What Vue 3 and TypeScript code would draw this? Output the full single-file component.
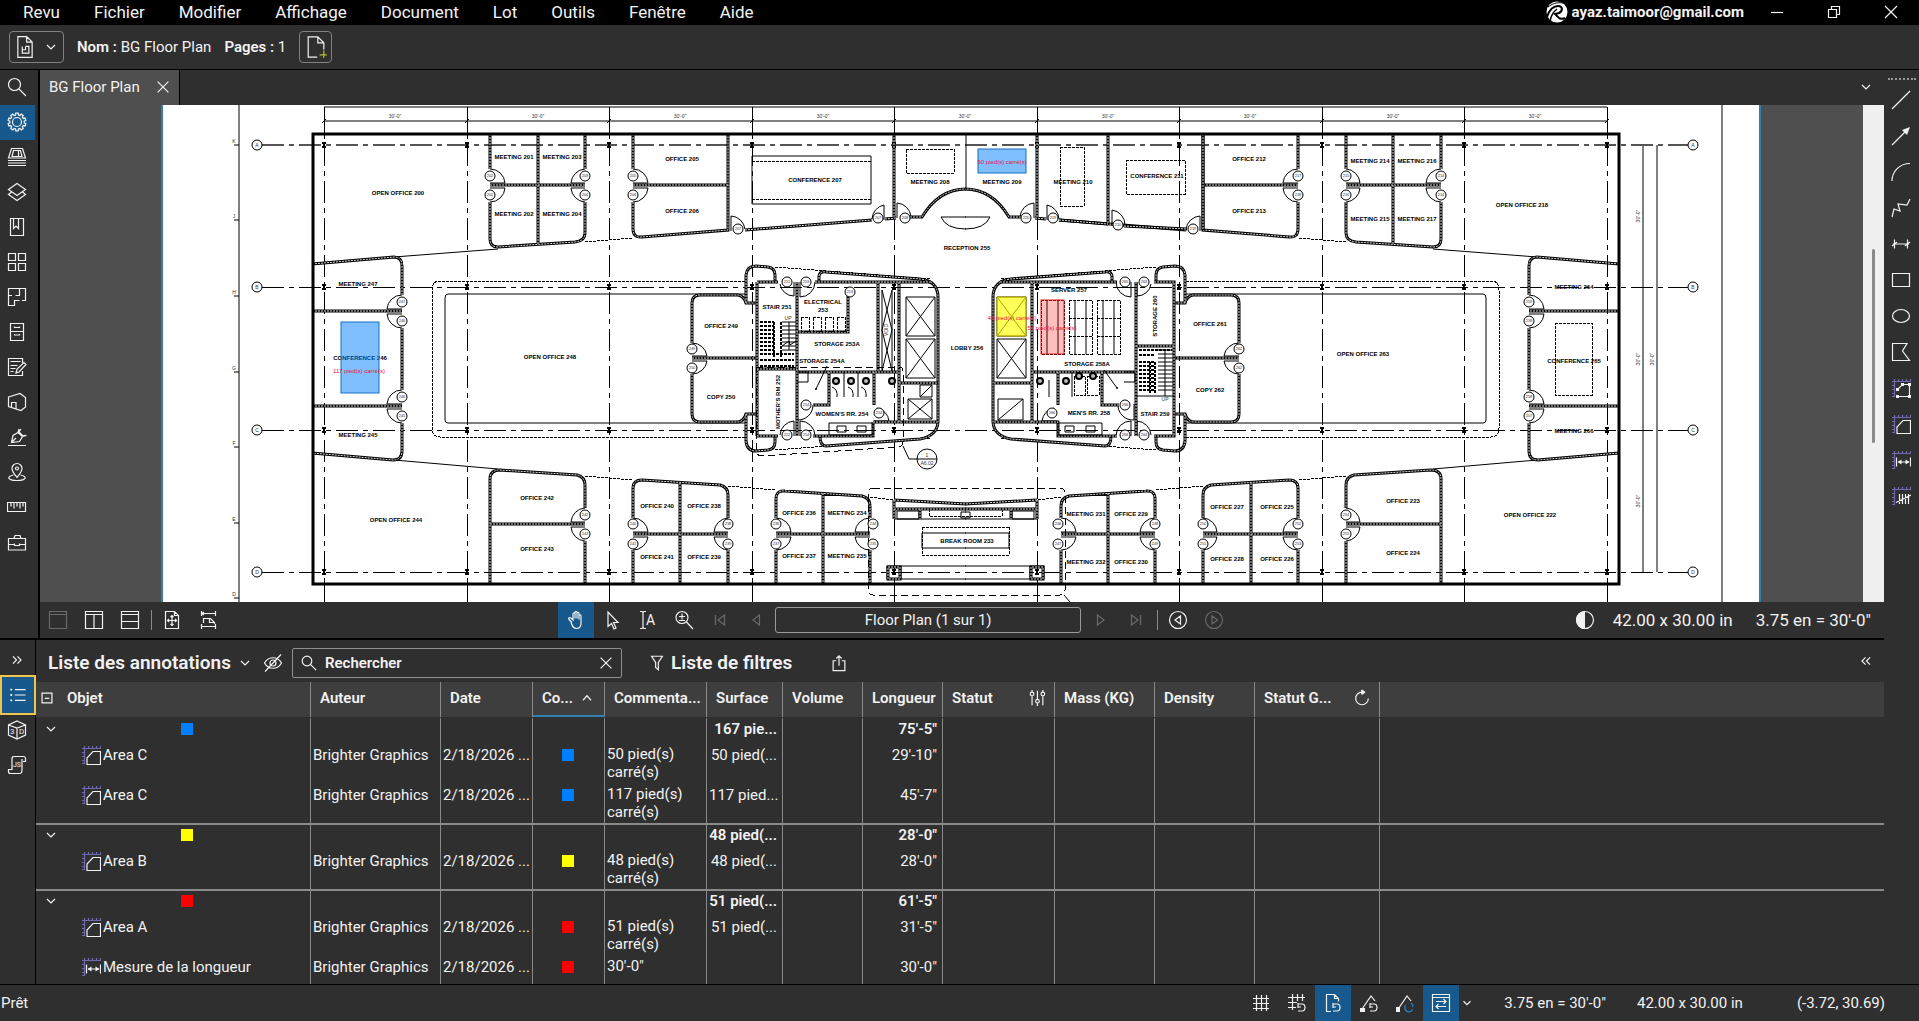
<script setup lang="ts">
import { h } from 'vue'

interface IconShape {
  stroke?: string
  fill?: string
  accent?: string
  accentColor?: string
  glyphs?: { x: number; y: number; size: number; text: string }[]
}

const ring = (x: number, y: number, r: number): string =>
  `M${x - r} ${y}a${r} ${r} 0 1 0 ${2 * r} 0a${r} ${r} 0 1 0 ${-2 * r} 0`

const gearOutline = (): string => {
  const teeth = 10
  const points: string[] = []
  for (let i = 0; i < teeth; i++) {
    const base = (i / teeth) * Math.PI * 2 - Math.PI / 2
    const corners: [number, number][] = [[-0.2, 7.2], [-0.14, 9], [0.14, 9], [0.2, 7.2]]
    for (const [turn, radius] of corners) {
      points.push(`${(10 + radius * Math.cos(base + turn)).toFixed(2)} ${(10 + radius * Math.sin(base + turn)).toFixed(2)}`)
    }
  }
  return `M${points.join('L')}z`
}

const scaleMarks = 'M3.5 1v18M1 3.5h19M1 7.500h2.500M1 11.5h2.500M1 15.5h2.500M1 18.5h2.500M7.500 1v2.500M11.5 1v2.500M15.5 1v2.500M19.5 1v2.500'

const shapes: Record<string, IconShape> = {
  search: { stroke: ring(7.5, 7.5, 6) + 'M12 12l7 7' },
  gear: { stroke: gearOutline() + ring(10, 10, 4.5) },
  thumbs: { stroke: 'M4.5 1.5h11l3 9.5h-17zM6.5 3.5h7l1.500 6h-10zM11.5 3.5v6M1 13.5h18M1 16h18M1 18.5h18' },
  layers: { stroke: 'M10 1.5l8.5 6L10 13.500 1.500 7.500zM4.500 10l-3 2.500L10 18.500l8.500-6-3-2.500' },
  bookmark: { stroke: 'M3.500 1.500h13v17h-13zM6.500 1.500v10l2.500-2.500 2.500 2.500v-10' },
  tiles: { stroke: 'M1.500 1.500h7v7h-7zM11.500 1.500h7v7h-7zM1.500 11.500h7v7h-7zM11.500 11.500h7v7h-7z' },
  spaces: { stroke: 'M5 8.500H1.500v-7h17v12H15M12.500 1.500v7h-4M1.500 8.500v10h6v-5h5' },
  cabinet: { stroke: 'M3.500 1.500h13v17h-13zM3.500 9.500h13M7.500 4.500v1h5v-1M7.500 12v1h5v-1' },
  form: { stroke: 'M15.500 6V1.500h-14v17h14V14M3.500 4.500h10M3.500 8.500h7M3.500 11.500h5M3.500 14.500h3M9 16l1-4 7-6.500 2 2L12 15z' },
  model: { stroke: 'M1.500 5L13 1.500l5.500 4v9.500L14 18.500l-12.500-4zM4.500 15v-4.500h4.500v6' },
  sign: { stroke: 'M1 18.500h18M4.500 15.500l1.500-7 5-3 4.500 4-3 5zM5 15l4-4M11 5.500L12 2M15.500 9.500l4-1M14 2l-2 3 4 4 2.500-1' },
  pin: { stroke: 'M10 15.500c-3-4-5-6-5-9a5 5 0 0 1 10 0c0 3-2 5-5 9zM6.500 13c-7 1.500-6.500 5.500 3.500 5.500s10.500-4 3.500-5.500' + ring(10, 6.500, 1.500) },
  ruler: { stroke: 'M.500 5.500h18v9H.500zM4 5.500v4M7 5.500v6M10 5.500v4M13 5.500v6M16 5.500v4' },
  toolbox: { stroke: 'M1.500 6.500h17v11.500h-17zM7 6.500l1-3h5l1 3M1.500 12.500h6m5 0h6M7.500 11.500v2h5v-2' },
  line: { stroke: 'M1 19L19 1' },
  arrow: { stroke: 'M1 19L15 5', fill: 'M19 1L11 4l5 5z' },
  arc: { stroke: 'M1 19C1 10 8 1.500 19 1.500' },
  polyline: { stroke: 'M1 19l2-8 6 2-2-7 9 1 3-6' },
  dimension: { stroke: 'M2 10h16M3.500 5.500v9M16.500 5.500v9M1 12l5-4M14 12l5-4' },
  rectangle: { stroke: 'M1.500 3.500h17v13h-17z' },
  ellipse: { stroke: 'M1.500 10a8.500 6.500 0 1 0 17 0a8.500 6.500 0 1 0-17 0' },
  polygon: { stroke: 'M1.500 1.500h14.500L11.500 9l7 9.500h-17z' },
  polyArea: { accent: scaleMarks, stroke: 'M6.500 11.500l5-5h7v12h-12', fill: 'M5 10h3v3H5zM10 5h3v3h-3zM17 5h3v3h-3zM17 17h3v3h-3zM5 17h3v3H5z' },
  area: { accent: scaleMarks, stroke: 'M6 19.500V13l6-6.500h7.500v13z' },
  length: { accent: scaleMarks, stroke: 'M5.500 7.500v9M19.500 7.500v9M7 12h11', fill: 'M6.500 12l4-2.500v5zM18.500 12l-4-2.500v5z' },
  count: { accent: scaleMarks, stroke: 'M8.500 8v10M11.500 8v10M14.500 8v10M17.500 8v10M5 16.500L20 9' },
  paneNone: { stroke: 'M1.500 1.500h17v17h-17zM1.500 4.500h17' },
  paneSplitV: { stroke: 'M1.500 1.500h17v17h-17zM1.500 4.500h17M10 4.500v14' },
  paneSplitH: { stroke: 'M1.500 1.500h17v17h-17zM1.500 4.500h17M1.500 11.500h17' },
  fitPage: { stroke: 'M3.500 1.500h9l4 4v13h-13zM12.500 1.500v4h4M10 5v11M5 10.500h10M8.500 7L10 5.500 11.500 7M8.500 14l1.500 1.500 1.500-1.500M7 9l-1.500 1.500L7 12M13 9l1.500 1.500L13 12' },
  fitWidth: { stroke: 'M3 3.500h15M3.500 1v5M17.500 1v5M5.500 13V8.500h7l4 4V14M11.500 8.500v4h5M3 16.500h15M3.500 14v5M17.500 14v5M4 3.500l2-1.500M4 3.500L6 5' },
  hand: { stroke: 'M6 12.500L3 9.500c-1-1.500.500-2.500 1.800-1.500L7 10V4c0-1.500 2-1.500 2 0v4.500V2.500c0-1.500 2-1.500 2 0v6-5c0-1.500 2-1.500 2 0v6V6c0-1.500 2-1.500 2 0v7c0 4-2 5.500-4.500 5.500-3 0-4-2-5.500-6' },
  cursor: { stroke: 'M6 2v14.500l3.500-3L12 19l2-1-2.500-5.500H16z' },
  textSelect: { stroke: 'M2 1.500h2l1 1 1-1h2M2 18.500h2l1-1 1 1h2M5 2.500v15', glyphs: [{ x: 8, y: 15, size: 14, text: 'A' }] },
  zoom: { stroke: ring(8, 7.500, 6) + 'M12.500 12l6.500 7M5 6.500h6M8 3.500v6M5 10.500h6' },
  first: { stroke: 'M5.500 5v10M14.500 5v10L8 10z' },
  previous: { stroke: 'M13.500 5v10L7 10z' },
  next: { stroke: 'M7.500 5v10l6.500-5z' },
  last: { stroke: 'M5.500 5v10l6.500-5zM14.500 5v10' },
  viewBack: { stroke: ring(10, 10, 8.500) + 'M12.500 6v8L7 10z' },
  viewForward: { stroke: ring(10, 10, 8.500) + 'M8 6v8l5.500-4z' },
  contrast: { stroke: ring(10, 10, 8.500), fill: 'M10 1a9 9 0 0 0 0 18z' },
  chevronDown: { stroke: 'M5 7.500l5 5 5-5' },
  chevronUp: { stroke: 'M5.500 12.500L10 7.500l4.500 5' },
  doubleRight: { stroke: 'M5.500 6l4 4-4 4M10.500 6l4 4-4 4' },
  doubleLeft: { stroke: 'M9.500 6l-4 4 4 4M14.500 6l-4 4 4 4' },
  close: { stroke: 'M4 4l12 12M16 4L4 16' },
  minimise: { stroke: 'M4 10.500h12' },
  restore: { stroke: 'M4.500 7.500h8v8h-8zM7.500 7.500v-3h8v8h-3' },
  eyeOff: { stroke: 'M1.500 10c4-7 13-7 17 0-4 7-13 7-17 0zM18 1.500L2 18.500' + ring(10, 10, 3) },
  filter: { stroke: 'M4 2.500h12l-4.500 7v8l-3-2.500V9.500z' },
  share: { stroke: 'M7 7.500H3.500v11h13v-11H13M10 13V2M7 5l3-3 3 3' },
  list: { stroke: 'M6.500 4h12M6.500 10h12M6.500 16h12', fill: 'M1.500 3h2v2h-2zM1.500 9h2v2h-2zM1.500 15h2v2h-2z' },
  cube: { stroke: 'M10 1l8.500 4v10L10 19l-8.500-4V5zM1.500 5l8.500 3 8.500-3M10 8v11', glyphs: [{ x: 3, y: 14, size: 8, text: '3' }, { x: 12, y: 14, size: 8, text: 'D' }] },
  script: { stroke: 'M16 6.500h2.500v-3c0-2-2-2-2-2H8c-2 0-3 0-3 2v11H1.500v2c0 1.500 1 2 2 2h9c2.500 0 2.500-2.500 2.500-4V4', glyphs: [{ x: 6, y: 12, size: 7, text: 'JS' }] },
  sliders: { stroke: 'M4.500 8v10M10.500 2v9M10.500 16v3M16.500 8v10M4.500 1v2M16.500 1v2' + ring(4.500, 5.500, 2) + ring(10.500, 13.500, 2) + ring(16.500, 5.500, 2) },
  reload: { stroke: 'M10 3.500a7 7 0 1 0 7 7M10 1l3 2.500L10 6', fill: 'M9 .500l4 3-4 3z' },
  hash: { stroke: 'M2 5.500h16M2 10.500h16M2 15.500h16M5.500 2v16M10.500 2v16M15.500 2v16' },
  hashSnap: { stroke: 'M1 4.500h17M1 9.500h9M1 14.500h8M5.500 1v16M10.500 1v7M15.500 1v7M11 11h4c4 0 4 7 0 7h-4M11 14h3M11 10v5' },
  pageSnap: { stroke: 'M8 18.500H3.500v-17h8l4 4v3M11.500 1.500v4h4M10 11h4c4 0 4 7 0 7h-4M10 14h3M10 10v5' },
  markSnap: { stroke: 'M2 17.500L12 3l4 5M11 11h4c4 0 4 7 0 7h-4M11 14h3M11 10v5', fill: 'M1 15h5v4H1z' },
  reuse: { stroke: 'M2.500 17L12 3l4 5', fill: 'M1 14h4v5H1z', accent: 'M10.500 12a5 5 0 0 0 1 6c2 1.500 5 1 6-1.500M18 14a5 5 0 0 0-2-4', accentColor: '#1c8ad6' },
  sync: { stroke: 'M1.500 1.500h17v17h-17zM1.500 4.500h17M5 8.500h10M12.500 6L15 8.500 12.500 11M15 13.500H5M7.500 11L5 13.500 7.500 16' },
  fileLock: { stroke: 'M3.500 .500h8l5 5v14h-13zM11.500 .500v5h5M7.500 9.500v6h6v-6h-3M10.500 9.500v3h-3' },
  filePlus: { stroke: 'M11 18.500H3.500v-17h8l5 5V12M11.500 1.500v5h5', accent: 'M13 16.500h6M16.500 13v6', accentColor: '#b5c431' },
  collapse: { stroke: 'M4.500 4.500h11v11h-11zM7.500 10.500h5' },
}

const Icon = (props: { name: string; size?: number }) => {
  const shape = shapes[props.name]
  const size = props.size ?? 20
  return h(
    'svg',
    { class: 'icon', viewBox: '0 0 20 20', width: size, height: size, 'aria-hidden': 'true', fill: 'none', stroke: 'currentColor', 'stroke-width': 24 / size },
    [
      shape.accent ? h('path', { d: shape.accent, style: { stroke: shape.accentColor ?? '#6f69ae' } }) : null,
      shape.stroke ? h('path', { d: shape.stroke }) : null,
      shape.fill ? h('path', { d: shape.fill, fill: 'currentColor', stroke: 'none' }) : null,
      ...(shape.glyphs ?? []).map((g) => h('text', { x: g.x, y: g.y, fill: 'currentColor', stroke: 'none', 'font-size': g.size }, g.text)),
    ],
  )
}
Icon.props = ['name', 'size']

const menus = ['Revu', 'Fichier', 'Modifier', 'Affichage', 'Document', 'Lot', 'Outils', 'Fenêtre', 'Aide']

const sideTools = [
  ['search', 'Recherche'], ['gear', 'Propriétés'], ['thumbs', 'Vignettes'], ['layers', 'Calques'], ['bookmark', 'Signets'],
  ['tiles', 'Jeux'], ['spaces', 'Espaces'], ['cabinet', 'Accès aux fichiers'], ['form', 'Formulaires'], ['model', 'Arborescence'],
  ['sign', 'Signatures'], ['pin', 'Lieux'], ['ruler', 'Mesures'], ['toolbox', 'Coffre à outils'],
]

const drawTools = [
  ['line', 'Ligne'], ['arrow', 'Flèche'], ['arc', 'Arc'], ['polyline', 'Polyligne'], ['dimension', 'Cote'], ['rectangle', 'Rectangle'],
  ['ellipse', 'Ellipse'], ['polygon', 'Polygone'], ['polyArea', 'Surface polygonale'], ['area', 'Surface'], ['length', 'Longueur'], ['count', 'Comptage'],
]

interface Row { kind: string; name: string; note: string[]; surface: string; length: string }
interface Group { color: string; surface: string; length: string; rows: Row[] }

const groups: Group[] = [
  {
    color: '#0080ff', surface: '167 pie...', length: '75\'-5"',
    rows: [
      { kind: 'area', name: 'Area C', note: ['50 pied(s)', 'carré(s)'], surface: '50 pied(...', length: '29\'-10"' },
      { kind: 'area', name: 'Area C', note: ['117 pied(s)', 'carré(s)'], surface: '117 pied...', length: '45\'-7"' },
    ],
  },
  {
    color: '#ffff00', surface: '48 pied(...', length: '28\'-0"',
    rows: [{ kind: 'area', name: 'Area B', note: ['48 pied(s)', 'carré(s)'], surface: '48 pied(...', length: '28\'-0"' }],
  },
  {
    color: '#ff0000', surface: '51 pied(...', length: '61\'-5"',
    rows: [
      { kind: 'area', name: 'Area A', note: ['51 pied(s)', 'carré(s)'], surface: '51 pied(...', length: '31\'-5"' },
      { kind: 'length', name: 'Mesure de la longueur', note: ['30\'-0"'], surface: '', length: '30\'-0"' },
    ],
  },
]

/* Floor plan: structural grid, walls of one half, and what differs between the halves */
const gridX = [324, 467, 609, 752, 894, 1037, 1179, 1322, 1464, 1607]
const gridY = [145, 287, 430, 572]
const rowNames = ['A', 'B', 'C', 'D']
const sheetMarks = [['K', 145], ['J', 220], ['H', 296], ['G', 372], ['F', 447], ['E', 523], ['D', 598]]

const halfWalls = [
  'M490 134V169M490 202V239Q490 247 498 247L575 242Q585 241 585 233V202M585 134V169M538 134V245M490 185H585',
  'M633 134V169M633 202V229Q633 238 642 237L728 230V134M633 185H728',
  'M312 264L394 257Q402 257 402 266V295M312 311H402M402 328V390M312 406H402M402 423V451Q402 460 393 460L312 453',
  'M490 584V479Q490 470 500 470L577 475Q585 477 585 485V508M585 541V584M490 524H585',
  'M633 518V488Q633 480 642 480L720 485Q728 487 728 495V518M633 550V584M728 550V584M680 483V584M633 534H728',
  'M776 518V499Q776 490 785 491L862 496Q870 498 870 506V518M776 550V584M870 550V584M823 493V584M776 534H870',
  'M745 230L872 220M885 219L896 218M894 134V218',
  'M910 217H922Q939 189 966 189',
  'M692 343V303Q692 295 700 295H738Q744 296 746 303H757M692 374V414Q692 422 700 422H738Q744 421 746 414H757M692 358H757',
  'M746 303V275Q747 266 756 266L768 267Q775 268 775 275V282M746 414V441Q747 451 756 451L768 450Q775 449 775 442V436',
  'M819 282V276Q820 271 826 272L920 279Q938 281 938 297V422Q937 436 920 439L826 446Q820 446 820 436',
  'M894 500L966 504M894 509H966M894 500V519M920 509V519',
]
const leftWalls = [
  'M757 282H778M815 282H931M757 282V436M797 282V436M757 369H797M848 292V332H797M878 282V372M899 282V422M797 372H899M899 383H938M873 422H938M873 422V436H813M757 436H778M829 372V405H813M874 372V405',
]
const rightWalls = [
  'M1000 282H1117M1154 282H1174V436H1154M1117 436H1058V422H994M1136 282V436M1032 282V422M1032 372H1136M994 383H1032M1136 346H1174M1102 372V405H1119M1058 372V405M1203 134V230M1108 134V224M1059 220L1108 224M1124 226L1187 229',
]

const halfThin = [
  'M394 257L498 249M394 460L498 469',
  'M490 183H505M490 188H505M571 183H585M571 188H585M633 183H648M633 188H648M387 309H402M387 314H402M387 404H402M387 409H402M571 522H585M571 527H585M633 532H648M633 537H648M714 532H728M714 537H728M776 532H791M776 537H791M855 532H870M855 537H870M692 356H707M692 361H707',
  'M490 169A15 15 0 0 1 505 183M490 202A15 15 0 0 0 505 188M585 169A15 15 0 0 0 571 183M585 202A15 15 0 0 1 571 188M633 169A15 15 0 0 1 648 183M633 202A15 15 0 0 0 648 188',
  'M402 295A15 15 0 0 0 387 309M402 328A15 15 0 0 1 387 314M402 390A15 15 0 0 0 387 404M402 423A15 15 0 0 1 387 409M692 343A15 15 0 0 1 707 356M692 374A15 15 0 0 0 707 361',
  'M585 508A15 15 0 0 0 571 522M585 541A15 15 0 0 1 571 527M633 518A15 15 0 0 1 648 532M633 550A15 15 0 0 0 648 537M728 518A15 15 0 0 0 714 532M728 550A15 15 0 0 1 714 537',
  'M776 518A15 15 0 0 1 791 532M776 550A15 15 0 0 0 791 537M870 518A15 15 0 0 0 855 532M870 550A15 15 0 0 1 855 537',
  'M731 231V216A15 15 0 0 1 745 229M884 220V205A15 15 0 0 0 872 219M897 218V203A15 15 0 0 1 911 217',
  'M794 282V296A14 14 0 0 1 780 284M800 282V297A15 15 0 0 0 815 282M794 436V421A15 15 0 0 0 780 435M800 436V421A15 15 0 0 1 815 436M797 404V420A15 15 0 0 0 813 405M874 421H889A15 15 0 0 0 877 408',
  'M746 294H448Q445 294 445 298V420Q445 423 448 423H746',
  'M887 566H966M887 579H966M887 566V579M901 566V579M894 519H966',
  'M897 511h22v8h-22zM922 533H966M922 533V548H966M941 217H966M941 217Q946 229 966 229M961 512H966M961 512V518H966',
]
const halfDotted = [
  'M585 242L633 238M745 281H440Q432 281 432 290V428Q432 437 440 437H745',
  'M585 476L633 480M728 486L776 490M870 497L894 500M775 267L930 279M775 450L930 438',
  'M922 527H966M922 527V555H966M929 509V516H966',
]
const halfTags = [
  [490, 176, 202], [490, 195, 202], [585, 176, 203], [585, 195, 204], [633, 176, 205], [633, 195, 206],
  [402, 302, 247], [402, 321, 246], [402, 397, 246], [402, 416, 245], [692, 349, 249], [692, 368, 250],
  [585, 515, 242], [585, 534, 243], [633, 524, 240], [633, 544, 241], [728, 524, 238], [728, 544, 239],
  [776, 524, 236], [776, 544, 237], [873, 524, 234], [873, 544, 235], [738, 229, 207], [878, 218, 207], [905, 218, 208],
  [787, 282, 251], [806, 282, 253], [787, 435, 252], [806, 435, 254], [806, 405, 254], [879, 413, 254],
]
const axis = 1931
const tags = [...halfTags, ...halfTags.map(([x, y, n]) => [axis - x, y, n + 12]), [850, 292, 253], [1118, 225, 210]]

const fixtures = [
  'M752 156h119v48h-119zM966 134V189',
  'M882 290V371M892 290V371M882 290L892 330M892 290L882 330M882 371L892 330M892 371L882 330',
  'M906 297h29v39h-29zM906 297l29 39M935 297l-29 39M906 339h29v39h-29zM906 339l29 39M935 339l-29 39',
  'M997 297h29v39h-29zM997 297l29 39M1026 297l-29 39M997 339h29v39h-29zM997 339l29 39M1026 339l-29 39',
  'M920 385h12v12h-12zM920 397l12-12M908 399h24v20h-24zM908 399l24 20M932 399l-24 20M998 399h25v21h-25zM998 420l25-21',
  'M782 322h14M782 326h14M782 330h14M782 334h14M782 338h14M782 342h14M782 346h14M782 350h14M789 322V350M782 346l7-5 1 4 6-4',
  'M1158 350h15M1158 354h15M1158 358h15M1158 362h15M1158 366h15M1158 370h15M1158 374h15M1158 378h15M1158 382h15M1158 386h15M1158 390h15M1136 396h38M1165 350V396',
  'M829 423h44v12h-44zM837 426h9v6h-9zM857 426h9v6h-9zM1058 423h44v12h-44zM1065 426h9v6h-9zM1086 426h9v6h-9z',
  'M844 372V397M858 372V397M1049 380V397M1072 372V397M832 387q6 2 5 10M848 387q6 2 5 10M861 387q6 2 5 10M797 372h11v10h-11M1124 372h11v10h-11',
  'M827 366L816 389M1104 370L1117 388M903 446L909 459H917M917 459H937M1064 595L1070 602M1112 224V210A15 15 0 0 1 1125 225',
]
const dashedFixtures = [
  'M752 161H871M752 199H871M906 149h48v24h-48zM1060 147h24v59h-24zM1126 160h59v34h-59zM1555 323h37v72h-37z',
  'M801 317h8v14h-8zM813 317h8v14h-8zM825 317h8v14h-8zM837 317h8v14h-8z',
  'M1069 300h23v54h-23zM1069 318h23M1069 336h23M1097 300h23v54h-23zM1097 318h23M1097 336h23M1041 300h23v54h-23z',
  'M1074 376h11v19h-11zM1087 376h12v19h-12z',
]
const stairs = [
  'M760 322h14M760 326h14M760 330h14M760 334h14M760 338h14M760 342h14M760 346h14M760 350h14M760 354h34M774 322V357M781 322V357M760 360h34M760 366h34',
  'M1139 362h16M1139 366h16M1139 370h16M1139 374h16M1139 378h16M1139 382h16M1139 386h16M1139 390h16M1150 362V394M1155 362V394M1139 350h33M1139 355h16',
]
const toilets = [[836, 381], [851, 381], [866, 381], [892, 381], [1040, 381], [1066, 381], [1079, 376], [1093, 376]]

const labels: [string, number, number][] = [
  ['OPEN OFFICE 200', 398, 193], ['MEETING 201', 514, 157], ['MEETING 203', 562, 157], ['MEETING 202', 514, 214], ['MEETING 204', 562, 214],
  ['OFFICE 205', 682, 159], ['OFFICE 206', 682, 211], ['CONFERENCE 207', 815, 180], ['MEETING 208', 930, 182], ['MEETING 209', 1002, 182],
  ['MEETING 210', 1073, 182], ['CONFERENCE 211', 1157, 176], ['OFFICE 212', 1249, 159], ['OFFICE 213', 1249, 211], ['MEETING 214', 1370, 161],
  ['MEETING 216', 1417, 161], ['MEETING 215', 1370, 219], ['MEETING 217', 1417, 219], ['OPEN OFFICE 218', 1522, 205], ['RECEPTION 255', 967, 248],
  ['MEETING 247', 358, 284], ['CONFERENCE 246', 360, 358], ['MEETING 245', 358, 435], ['OPEN OFFICE 248', 550, 357], ['OFFICE 249', 721, 326],
  ['COPY 250', 721, 397], ['STAIR 251', 777, 307], ['ELECTRICAL', 823, 302], ['253', 823, 310], ['STORAGE 253A', 837, 344],
  ['STORAGE 254A', 822, 361], ['LOBBY 256', 967, 348], ['SERVER 257', 1069, 290], ['STORAGE 258A', 1087, 364], ['OFFICE 261', 1210, 324],
  ['COPY 262', 1210, 390], ['OPEN OFFICE 263', 1363, 354], ['MEETING 264', 1574, 287], ['CONFERENCE 265', 1574, 361], ['MEETING 266', 1574, 431],
  ['WOMEN\'S RR. 254', 842, 414], ['MEN\'S RR. 258', 1089, 413], ['STAIR 259', 1155, 414], ['OFFICE 242', 537, 498], ['OFFICE 243', 537, 549],
  ['OPEN OFFICE 244', 396, 520], ['OFFICE 240', 657, 506], ['OFFICE 238', 704, 506], ['OFFICE 241', 657, 557], ['OFFICE 239', 704, 557],
  ['OFFICE 236', 799, 513], ['MEETING 234', 847, 513], ['OFFICE 237', 799, 556], ['MEETING 235', 847, 556], ['BREAK ROOM 233', 967, 541],
  ['MEETING 231', 1086, 514], ['OFFICE 229', 1131, 514], ['MEETING 232', 1086, 562], ['OFFICE 230', 1131, 562], ['OFFICE 227', 1227, 507],
  ['OFFICE 225', 1277, 507], ['OFFICE 228', 1227, 559], ['OFFICE 226', 1277, 559], ['OFFICE 223', 1403, 501], ['OFFICE 224', 1403, 553],
  ['OPEN OFFICE 222', 1530, 515],
]
const uprightLabels: [string, number, number][] = [['MOTHER\'S RM 252', 778, 402], ['STORAGE 260', 1155, 316]]
const sideDims: [number, number][] = [[1640, 216], [1640, 359], [1654, 359], [1640, 501]]
</script>

<template>
  <div class="app">
    <header class="titlebar">
      <nav class="menus" aria-label="Menu principal">
        <button v-for="menu in menus" :key="menu" type="button">{{ menu }}</button>
      </nav>
      <div class="account">
        <svg class="logo" viewBox="0 0 22 22" width="22" height="22" aria-hidden="true">
          <circle cx="11" cy="11" r="10.500" fill="#fff" />
          <path d="M1 16C3 10 6 5 12 5c5 0 5 5 1 7l-4 1 4 4c2 1 4 1 6 0" fill="none" stroke="#000" stroke-width="2" />
          <path d="M4 20C5 15 7 11 11 8" fill="none" stroke="#000" stroke-width="1.500" />
          <path d="M2 6C6 3 10 1 17 2" fill="none" stroke="#000" stroke-width="1" />
        </svg>
        <span>ayaz.taimoor@gmail.com</span>
      </div>
      <div class="window-buttons">
        <button type="button" aria-label="Réduire"><Icon name="minimise" /></button>
        <button type="button" aria-label="Restaurer"><Icon name="restore" /></button>
        <button type="button" aria-label="Fermer"><Icon name="close" /></button>
      </div>
    </header>

    <section class="docbar">
      <button class="boxed split" type="button" aria-label="Type de document">
        <Icon name="fileLock" :size="22" /><Icon name="chevronDown" :size="16" />
      </button>
      <p><b>Nom :</b> BG Floor Plan</p>
      <p><b>Pages :</b> 1</p>
      <button class="boxed" type="button" aria-label="Ajouter une page"><Icon name="filePlus" :size="24" /></button>
    </section>

    <div class="workspace">
      <div class="main">
        <div class="upper">
          <nav class="rail" aria-label="Panneaux">
            <button v-for="[name, label] in sideTools" :key="name" type="button" :aria-label="label" :class="{ active: name === 'gear' }">
              <Icon :name="name" />
            </button>
          </nav>

          <section class="viewer">
            <div class="tabs">
              <div class="tab">
                <span>BG Floor Plan</span>
                <button type="button" aria-label="Fermer l'onglet"><Icon name="close" :size="18" /></button>
              </div>
              <button class="tab-menu" type="button" aria-label="Onglets"><Icon name="chevronDown" :size="16" /></button>
            </div>

            <div class="canvas">
              <svg class="plan" viewBox="40 105 1823 497" role="img" aria-label="Floor Plan">
                <rect x="162" y="105" width="1598" height="497" class="sheet" />
                <path class="sheet-edge" d="M162 105V602M1760 105V602" />
                <path class="thin" d="M239 105V602M1722 105V602" />
                <g v-for="[name, y] in sheetMarks" :key="name">
                  <path class="thin" :d="`M234 ${y}H239`" />
                  <text class="small" x="234" :y="Number(y) - 2">{{ name }}</text>
                </g>

                <path class="thin" d="M324 107H1607M324 121H1607M1643 145V572M1657 145V572" />
                <path v-for="x in gridX" :key="x" class="axis" :d="`M${x} 107V584`" />
                <path v-for="x in gridX" :key="`s${x}`" class="hair" :d="`M${x} 107V134M${x} 584V602`" />
                <template v-for="(x, i) in gridX" :key="`d${x}`">
                  <text v-if="i < 9" class="small" :x="x + 71" y="118">30'-0"</text>
                  <path class="thin" :d="`M${x - 2} 123l4-4`" />
                </template>
                <text v-for="[x, y] in sideDims" :key="`${x}-${y}`" class="small" :transform="`translate(${x} ${y}) rotate(-90)`">30'-0"</text>
                <template v-for="(y, i) in gridY" :key="y">
                  <path class="axis" :class="{ grey: i === 0 }" :d="`M262 ${y}H1688`" />
                  <circle class="bubble" cx="257" :cy="y" r="5" />
                  <circle class="bubble" cx="1693" :cy="y" r="5" />
                  <text class="small" x="257" :y="y + 2">{{ rowNames[i] }}</text>
                  <text class="small" x="1693" :y="y + 2">{{ rowNames[i] }}</text>
                  <path v-for="x in gridX" :key="x" class="column" :d="`M${x - 2} ${y - 2}h4M${x} ${y - 2}v4M${x - 2} ${y + 2}h4`" />
                </template>

                <g v-for="side in 2" :key="side" :transform="side === 2 ? `translate(${axis} 0) scale(-1 1)` : undefined">
                  <path v-for="d in halfDotted" :key="d" class="dotted" :d="d" />
                  <path v-for="d in halfThin" :key="d" class="thin" :d="d" />
                  <path v-for="d in halfWalls" :key="d" class="wall" :d="d" />
                  <path v-for="d in halfWalls" :key="`c${d}`" class="wall-core" :d="d" />
                  <path class="wall" d="M888 567h12v12h-12z" />
                  <path class="wall-core" d="M888 567h12v12h-12z" />
                </g>
                <path v-for="d in [...leftWalls, ...rightWalls]" :key="d" class="wall" :d="d" />
                <path v-for="d in [...leftWalls, ...rightWalls]" :key="`c${d}`" class="wall-core" :d="d" />
                <path v-for="d in fixtures" :key="d" class="thin" :d="d" />
                <path v-for="d in dashedFixtures" :key="d" class="dotted" :d="d" />
                <path v-for="d in stairs" :key="d" class="stair" :d="d" />
                <circle v-for="[x, y] in toilets" :key="x" class="toilet" :cx="x" :cy="y" r="3" />
                <path class="thin" d="M1047 300V354M1058 300V354M1075 300V354M1086 300V354M1103 300V354M1114 300V354" />
                <circle cx="816" cy="389" r="1" /><circle cx="1117" cy="388" r="1" />

                <path class="callout" d="M756 367H900Q903 367 903 371V442Q903 446 899 447L762 456Q756 456 756 450z" />
                <rect class="callout" x="868" y="488" width="197" height="107" rx="5" />
                <circle class="bubble" cx="927" cy="459" r="10" />
                <path class="thin" d="M917 459H937" />
                <text class="small" x="927" y="457">1</text>
                <text class="small" x="927" y="465">A6.02</text>

                <rect class="outer" x="313" y="134" width="1306" height="450" />

                <g v-for="([x, y, n], i) in tags" :key="`t${i}`">
                  <circle class="bubble" :cx="x" :cy="y" r="5" />
                  <text class="tag" :x="x" :y="y + 1">{{ n }}</text>
                </g>

                <text v-for="[text, x, y] in labels" :key="text" class="label" :x="x" :y="y + 2">{{ text }}</text>
                <text v-for="[text, x, y] in uprightLabels" :key="text" class="label" :transform="`translate(${x + 2} ${y}) rotate(-90)`">{{ text }}</text>
                <text class="small" transform="translate(888 330) rotate(-90)">VOID</text>
                <text class="small" x="788" y="320">UP</text>
                <text class="small" x="1165" y="401">UP</text>

                <g class="markup blue">
                  <rect x="341" y="322" width="38" height="71" /><rect x="978" y="149" width="48" height="24" />
                </g>
                <g class="markup yellow"><rect x="997" y="297" width="29" height="39" /></g>
                <g class="markup red"><rect x="1041" y="300" width="23" height="54" /></g>
                <text class="measure" x="359" y="373">117 pied(s) carré(s)</text>
                <text class="measure" x="1002" y="164">50 pied(s) carré(s)</text>
                <text class="measure" x="1012" y="320">48 pied(s) carré(s)</text>
                <text class="measure" x="1052" y="330">51 pied(s) carré(s)</text>
              </svg>
              <div class="scrollbar"><i></i></div>
            </div>

            <div class="viewbar">
              <div class="cluster">
                <button type="button" class="off" aria-label="Vue unique"><Icon name="paneNone" /></button>
                <button type="button" aria-label="Diviser verticalement"><Icon name="paneSplitV" /></button>
                <button type="button" aria-label="Diviser horizontalement"><Icon name="paneSplitH" /></button>
                <hr />
                <button type="button" aria-label="Ajuster à la page"><Icon name="fitPage" /></button>
                <button type="button" aria-label="Ajuster à la largeur"><Icon name="fitWidth" /></button>
              </div>
              <div class="cluster">
                <button type="button" class="active" aria-label="Panoramique"><Icon name="hand" /></button>
                <button type="button" aria-label="Sélection"><Icon name="cursor" /></button>
                <button type="button" aria-label="Sélection de texte"><Icon name="textSelect" /></button>
                <button type="button" aria-label="Zoom"><Icon name="zoom" /></button>
                <button type="button" class="off" aria-label="Première page"><Icon name="first" /></button>
                <button type="button" class="off" aria-label="Page précédente"><Icon name="previous" /></button>
                <input class="page" type="text" value="Floor Plan (1 sur 1)" aria-label="Page" />
                <button type="button" class="off" aria-label="Page suivante"><Icon name="next" /></button>
                <button type="button" class="off" aria-label="Dernière page"><Icon name="last" /></button>
                <hr />
                <button type="button" aria-label="Vue précédente"><Icon name="viewBack" /></button>
                <button type="button" class="off" aria-label="Vue suivante"><Icon name="viewForward" /></button>
              </div>
              <div class="cluster sizes">
                <button type="button" aria-label="Contraste"><Icon name="contrast" /></button>
                <span>42.00 x 30.00 in</span>
                <span>3.75 en = 30'-0"</span>
              </div>
            </div>
          </section>
        </div>

        <section class="panel">
          <nav class="panel-rail" aria-label="Panneaux inférieurs">
            <button type="button" aria-label="Développer"><Icon name="doubleRight" :size="18" /></button>
            <button type="button" class="current" aria-label="Liste des annotations"><Icon name="list" :size="18" /></button>
            <button type="button" aria-label="Modèle 3D"><Icon name="cube" /></button>
            <button type="button" aria-label="JavaScript"><Icon name="script" /></button>
          </nav>
          <div class="panel-body">
            <div class="panel-head">
              <h2>Liste des annotations</h2>
              <button type="button" aria-label="Choisir la liste"><Icon name="chevronDown" :size="16" /></button>
              <button type="button" class="wide" aria-label="Masquer les annotations"><Icon name="eyeOff" /></button>
              <label class="search">
                <Icon name="search" :size="16" />
                <input type="text" placeholder="Rechercher" aria-label="Rechercher" />
                <Icon name="close" :size="18" />
              </label>
              <button type="button" class="filters"><Icon name="filter" :size="18" />Liste de filtres</button>
              <button type="button" aria-label="Exporter"><Icon name="share" :size="18" /></button>
              <button type="button" class="fold" aria-label="Réduire le panneau"><Icon name="doubleLeft" :size="18" /></button>
            </div>

            <table>
              <colgroup>
                <col class="c-object" /><col class="c-author" /><col class="c-date" /><col class="c-color" /><col class="c-note" /><col class="c-surface" />
                <col class="c-volume" /><col class="c-volume" /><col class="c-status" /><col class="c-mass" /><col class="c-mass" /><col class="c-state" /><col />
              </colgroup>
              <thead>
                <tr>
                  <th><span class="th"><Icon name="collapse" :size="18" />Objet</span></th>
                  <th>Auteur</th>
                  <th>Date</th>
                  <th class="sorted"><span class="th spread">Co...<Icon name="chevronUp" :size="18" /></span></th>
                  <th>Commenta...</th>
                  <th>Surface</th>
                  <th>Volume</th>
                  <th>Longueur</th>
                  <th><span class="th spread">Statut<Icon name="sliders" :size="18" /></span></th>
                  <th>Mass (KG)</th>
                  <th>Density</th>
                  <th><span class="th spread">Statut G...<Icon name="reload" :size="18" /></span></th>
                  <th></th>
                </tr>
              </thead>
              <tbody v-for="group in groups" :key="group.color">
                <tr class="group">
                  <td><span class="group-key"><Icon name="chevronDown" :size="16" /><i class="swatch" :style="{ background: group.color }"></i></span></td>
                  <td></td><td></td><td></td><td></td>
                  <td class="num">{{ group.surface }}</td>
                  <td></td>
                  <td class="num">{{ group.length }}</td>
                  <td></td><td></td><td></td><td></td><td></td>
                </tr>
                <tr v-for="(row, i) in group.rows" :key="i">
                  <td><span class="object"><Icon :name="row.kind" />{{ row.name }}</span></td>
                  <td>Brighter Graphics</td>
                  <td>2/18/2026 ...</td>
                  <td class="color"><i class="swatch" :style="{ background: group.color }"></i></td>
                  <td class="note"><template v-for="(part, n) in row.note" :key="n"><br v-if="n" />{{ part }}</template></td>
                  <td class="num">{{ row.surface }}</td>
                  <td></td>
                  <td class="num">{{ row.length }}</td>
                  <td></td><td></td><td></td><td></td><td></td>
                </tr>
              </tbody>
            </table>
          </div>
        </section>
      </div>

      <aside class="draw-rail" aria-label="Outils de dessin">
        <div class="grip"></div>
        <button v-for="[name, label] in drawTools" :key="name" type="button" :aria-label="label"><Icon :name="name" /></button>
      </aside>
    </div>

    <footer class="status">
      <span class="ready">Prêt</span>
      <button type="button" aria-label="Grille"><Icon name="hash" /></button>
      <button type="button" aria-label="Accrocher à la grille"><Icon name="hashSnap" /></button>
      <button type="button" class="active" aria-label="Accrocher au contenu"><Icon name="pageSnap" /></button>
      <button type="button" aria-label="Accrocher aux annotations"><Icon name="markSnap" /></button>
      <button type="button" aria-label="Réutiliser"><Icon name="reuse" /></button>
      <button type="button" class="active" aria-label="Synchroniser"><Icon name="sync" /></button>
      <button type="button" class="narrow" aria-label="Options de synchronisation"><Icon name="chevronDown" :size="14" /></button>
      <span class="scale">3.75 en = 30'-0"</span>
      <span class="dims">42.00 x 30.00 in</span>
      <span class="pos">(-3.72, 30.69)</span>
    </footer>
  </div>
</template>

<style>
body {
  margin: 0;
  background: #2f2f2f;
}
</style>

<style scoped>
.app {
  display: flex;
  flex-direction: column;
  height: 100vh;
  overflow: hidden;
  background: #2f2f2f;
  color: #f2f2f2;
  font: 15px/20px Roboto, "Liberation Sans", sans-serif;
}
button {
  display: flex;
  align-items: center;
  justify-content: center;
  box-sizing: border-box;
  padding: 0;
  border: 0;
  background: none;
  color: inherit;
  font: inherit;
}
.icon {
  display: block;
  flex: none;
}
p, h2 {
  margin: 0;
}
.active {
  background: #17598c;
}
.off {
  color: #6a6a6a;
}

.titlebar {
  display: flex;
  align-items: center;
  height: 23px;
  padding-bottom: 2px;
  background: #000;
}
.menus {
  display: flex;
  gap: 34px;
  flex: 1;
  padding-left: 23px;
  font-size: 17px;
}
.account {
  display: flex;
  align-items: center;
  gap: 4px;
  font-weight: 700;
}
.window-buttons {
  display: flex;
  padding-left: 4px;
}
.window-buttons button {
  width: 57px;
}

.docbar {
  display: flex;
  align-items: center;
  gap: 13px;
  height: 44px;
  padding: 0 9px;
  border-bottom: 1px solid #000;
}
.docbar b {
  font-weight: 600;
}
.boxed {
  width: 33px;
  height: 32px;
  border: 1px solid #808080;
  border-radius: 4px;
}
.split {
  width: 55px;
  justify-content: space-around;
}

.workspace {
  display: flex;
  flex: 1;
  min-height: 0;
}
.main {
  display: flex;
  flex-direction: column;
  flex: 1;
  min-width: 0;
}
.upper {
  display: flex;
  flex: 1;
  min-height: 0;
  border-bottom: 2px solid #000;
}
.rail {
  width: 38px;
  border-right: 2px solid #000;
}
.rail button {
  width: 35px;
  height: 35px;
  padding: 0 2px 2px 0;
}
.viewer {
  display: flex;
  flex-direction: column;
  flex: 1;
  min-width: 0;
}
.tabs {
  display: flex;
  justify-content: space-between;
  height: 35px;
}
.tab {
  display: flex;
  align-items: center;
  gap: 14px;
  padding: 0 7px 2px 9px;
  border-right: 1px solid #000;
  background: #4f4f4f;
}
.tab-menu {
  width: 36px;
  padding-bottom: 2px;
}
.canvas {
  display: flex;
  flex: 1;
  min-height: 0;
  background: #4f4f4f;
}
.plan {
  display: block;
  flex: 1;
  min-width: 0;
  height: 100%;
}
.scrollbar {
  display: flex;
  flex-direction: column;
  align-items: center;
  width: 21px;
  background: #f0f0f0;
}
.scrollbar::before {
  flex: 29;
  content: "";
}
.scrollbar i {
  flex: 39;
  width: 3px;
  border-radius: 2px;
  background: #8a8a8a;
}
.scrollbar::after {
  flex: 32;
  content: "";
}

.sheet { fill: #fff; }
.sheet-edge { stroke: #2f7fa8; stroke-width: 2; }
.thin, .hair, .dotted, .axis, .column, .callout, .stair { fill: none; stroke: #000; stroke-width: 1; }
.hair, .axis, .dotted, .stair, .callout { shape-rendering: crispEdges; }
.axis { stroke-dasharray: 22 5 5 5; }
.axis.grey { stroke: #555; stroke-width: 2; }
.dotted { stroke-dasharray: 3 1; }
.stair { stroke-width: 2; stroke-dasharray: 3 1; }
.callout { stroke-dasharray: 7 4; }
.column { stroke-width: 2; }
.bubble { fill: #fff; stroke: #000; stroke-width: 1; }
.toilet { fill: #bbb; stroke: #000; stroke-width: 2; }
.wall { fill: none; stroke: #000; stroke-width: 3; }
.wall-core { fill: none; stroke: #ddd; stroke-width: 1; stroke-dasharray: 2 1; }
.outer { fill: none; stroke: #000; stroke-width: 3; }
.plan text { text-anchor: middle; font-family: "Liberation Sans", Arial, sans-serif; }
.plan .label { font-size: 6px; font-weight: 700; }
.plan .small { font-size: 5px; fill: #333; }
.plan .tag { font-size: 4px; fill: #333; }
.plan .measure { font-size: 6px; fill: #e8123c; }
.markup rect { stroke-width: 1; }
.blue rect { fill: #0080ff; fill-opacity: .5; stroke: #1470c0; }
.yellow rect { fill: #ffff00; fill-opacity: .65; stroke: #c8b400; }
.red rect { fill: #ff0000; fill-opacity: .25; stroke: #e02020; }

.viewbar {
  display: grid;
  grid-template-columns: 31fr auto 39fr;
  height: 36px;
}
.cluster {
  display: flex;
  align-items: center;
}
.cluster button {
  width: 36px;
  height: 36px;
}
.cluster hr {
  width: 1px;
  height: 20px;
  margin: 0 2px 0 3px;
  border: 0;
  background: #8a8a8a;
}
.page {
  box-sizing: border-box;
  width: 306px;
  height: 26px;
  margin: 0 1px;
  padding: 0;
  border: 1px solid #9a9a9a;
  border-radius: 3px;
  background: none;
  color: inherit;
  font: inherit;
  text-align: center;
}
.sizes {
  justify-content: flex-end;
  padding-right: 13px;
  font-size: 17px;
}
.sizes span + span {
  padding-left: 23px;
}
.sizes button {
  margin-right: 10px;
}

.panel {
  display: flex;
}
.panel-rail {
  width: 35px;
  padding-top: 2px;
  border-right: 1px solid #000;
}
.panel-rail button {
  width: 35px;
  height: 35px;
  padding-right: 1px;
}
.panel-rail .current {
  width: 36px;
  height: 40px;
  margin: -2px 0 -3px;
  border: 2px solid #f0c44c;
  background: #17598c;
}
.panel-body {
  flex: 1;
  min-width: 0;
}
.panel-head {
  display: flex;
  align-items: center;
  box-sizing: border-box;
  height: 42px;
  padding: 3px 0 0 12px;
}
.panel-head h2, .filters {
  font-size: 19px;
  font-weight: 600;
}
.panel-head button {
  width: 28px;
}
.panel-head .filters {
  width: auto;
  gap: 5px;
  margin: 0 33px 0 26px;
}
.panel-head .fold {
  margin: 0 4px 4px auto;
}
.search {
  display: flex;
  align-items: center;
  gap: 8px;
  width: 314px;
  height: 28px;
  margin-left: 5px;
  padding: 0 6px 0 8px;
  border: 1px solid #8f8f8f;
  border-radius: 2px;
}
.search input {
  flex: 1;
  min-width: 0;
  padding: 0;
  border: 0;
  outline: 0;
  background: none;
  color: inherit;
  font: inherit;
  font-weight: 600;
}
.search input::placeholder {
  color: #f2f2f2;
  opacity: 1;
}

table {
  width: 100%;
  table-layout: fixed;
  border-collapse: separate;
  border-spacing: 0;
}
.c-object { width: 275px; }
.c-author { width: 130px; }
.c-date { width: 92px; }
.c-color { width: 72px; }
.c-note { width: 102px; }
.c-surface { width: 76px; }
.c-volume { width: 80px; }
.c-status { width: 112px; }
.c-mass { width: 100px; }
.c-state { width: 125px; }
th {
  box-sizing: border-box;
  height: 35px;
  padding: 0 8px 3px 9px;
  border-right: 1px solid #8a8a8a;
  background: #3e3e3e;
  font-weight: 600;
  text-align: left;
  white-space: nowrap;
}
th:first-child {
  padding-left: 2px;
}
th:last-child, td:last-child {
  border-right: 0;
}
.sorted {
  padding-bottom: 1px;
  border-bottom: 2px solid #2f7fb0;
}
.th {
  display: flex;
  align-items: center;
  gap: 11px;
}
.spread {
  justify-content: space-between;
  gap: 0;
}
td {
  padding: 2px 5px 7px 2px;
  border-right: 1px solid #8a8a8a;
  vertical-align: top;
  white-space: nowrap;
}
.note {
  padding-bottom: 2px;
  line-height: 18px;
}
.num {
  text-align: right;
}
.group td {
  height: 20px;
  padding-top: 0;
  padding-bottom: 4px;
  border-top: 2px solid #8a8a8a;
  font-weight: 600;
}
thead + tbody .group td {
  border-top-color: #2f2f2f;
}
.group-key {
  display: flex;
  align-items: center;
  gap: 122px;
  height: 20px;
  padding-left: 5px;
}
.swatch {
  display: block;
  width: 12px;
  height: 12px;
}
.color .swatch {
  margin: 4px 0 0 27px;
}
.object {
  display: flex;
  align-items: center;
  gap: 2px;
  height: 20px;
  padding-left: 43px;
}

.draw-rail {
  width: 35px;
}
.grip {
  height: 4px;
  margin: 4px 3px 2px 4px;
  border-bottom: 2px dotted #999;
}
.draw-rail button {
  width: 34px;
  height: 36px;
}

.status {
  display: flex;
  align-items: center;
  height: 36px;
  padding-right: 34px;
  border-top: 1px solid #000;
}
.ready {
  flex: 1;
  padding-left: 1px;
}
.status button {
  width: 36px;
  height: 36px;
}
.status .narrow {
  width: 16px;
}
.scale {
  padding-left: 29px;
}
.dims {
  padding: 0 54px 0 31px;
}
</style>
